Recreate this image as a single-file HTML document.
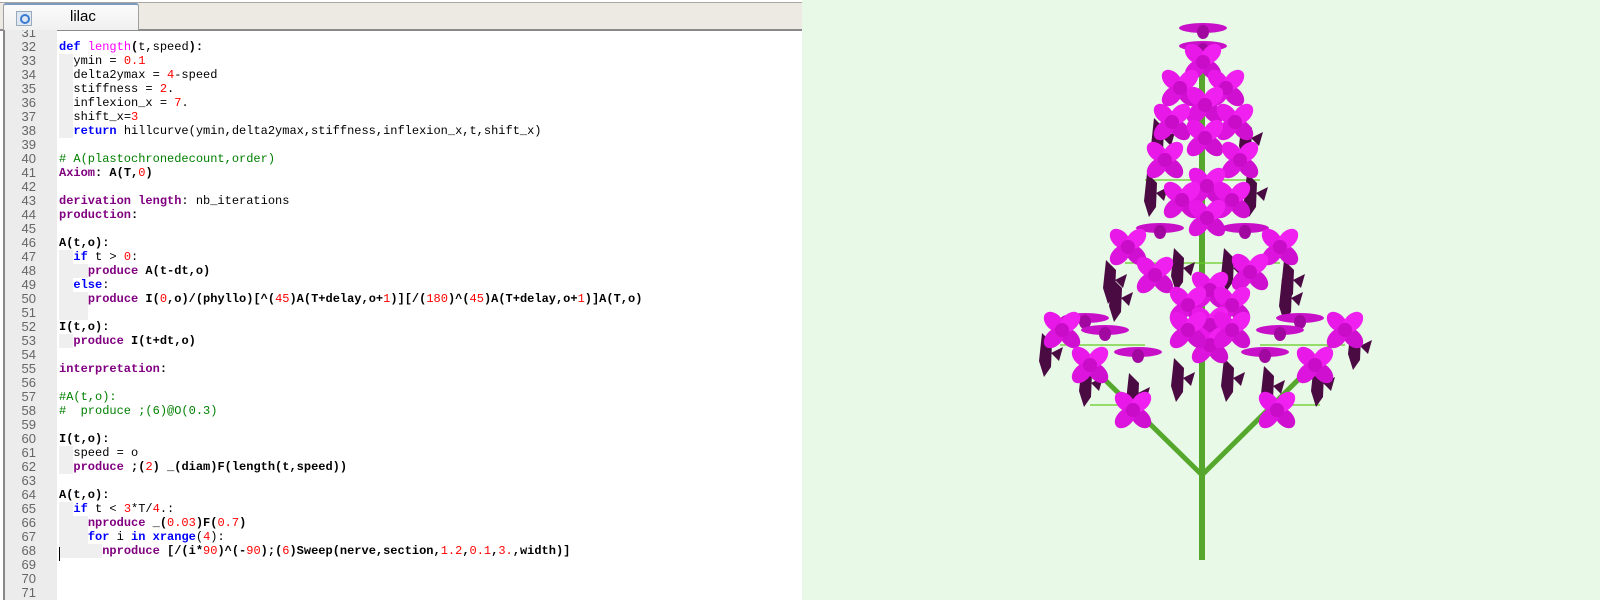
<!DOCTYPE html>
<html><head><meta charset="utf-8"><style>
body{margin:0;width:1600px;height:600px;overflow:hidden;background:#fff;position:relative;font-family:"Liberation Sans",sans-serif}
#ed{position:absolute;left:0;top:0;width:802px;height:600px;background:#fff;overflow:hidden}
#tb{position:absolute;left:0;top:2px;width:802px;height:26px;background:#ede9e3;border-top:1px solid #a8a8a0;border-bottom:2px solid #8a8a8a}
#tab{position:absolute;left:3px;top:3px;width:134px;height:25px;background:linear-gradient(#fbfbfb,#f0f0f0);border:1px solid #a0a0a0;border-top:2px solid #7a9ac0;border-bottom:none;border-radius:3px 3px 0 0}
#tab span{position:absolute;left:66px;top:3px;font-size:15px;color:#000}
#ico{position:absolute;left:12px;top:6px;width:14px;height:13px;background:#dde8f4;border:1px solid #9ab}
#ico:after{content:"";position:absolute;left:3px;top:2px;width:6px;height:6px;border:2px solid #3a7ad0;border-radius:50%}
#gut{position:absolute;left:3px;top:30px;width:52px;height:570px;background:#ececec;border-left:2px solid #888}
#code{position:absolute;left:0;top:30px;width:802px;height:570px;overflow:hidden}
.l{position:absolute;left:0;height:14px;line-height:14px;font-family:"Liberation Mono",monospace;font-size:12px;white-space:pre;color:#000}
.l .no{position:absolute;left:14px;width:22px;text-align:right;color:#666;font-family:"Liberation Sans",sans-serif;font-size:13px}
.l .t{position:absolute;left:59px}
.ind{background:#efefef}
.k{color:#0000ff;font-weight:bold}.f{color:#ff00ff}.n{color:#ff0000;font-weight:normal}.b{font-weight:bold}.p{color:#800080;font-weight:bold}.c{color:#008000}
#cur{position:absolute;left:59px;top:547px;width:1px;height:14px;background:#000}
#view{position:absolute;left:802px;top:0;width:798px;height:600px;background:#e8f9e8}
</style></head><body>
<div id="ed">
<div id="tb"></div>
<div id="tab"><div id="ico"></div><span>lilac</span></div>
<div id="gut"></div>
<div id="code">
<div class="l" style="top:-4px"><span class="no">31</span></div>
<div class="l" style="top:10px"><span class="no">32</span><span class="t"><span class="k">def</span> <span class="f">length</span><span class="b">(</span>t,speed<span class="b">):</span></span></div>
<div class="l" style="top:24px"><span class="no">33</span><span class="t"><span class="ind">  </span>ymin = <span class="n">0.1</span></span></div>
<div class="l" style="top:38px"><span class="no">34</span><span class="t"><span class="ind">  </span>delta2ymax = <span class="n">4</span>-speed</span></div>
<div class="l" style="top:52px"><span class="no">35</span><span class="t"><span class="ind">  </span>stiffness = <span class="n">2</span>.</span></div>
<div class="l" style="top:66px"><span class="no">36</span><span class="t"><span class="ind">  </span>inflexion_x = <span class="n">7</span>.</span></div>
<div class="l" style="top:80px"><span class="no">37</span><span class="t"><span class="ind">  </span>shift_x=<span class="n">3</span></span></div>
<div class="l" style="top:94px"><span class="no">38</span><span class="t"><span class="ind">  </span><span class="k">return</span> hillcurve(ymin,delta2ymax,stiffness,inflexion_x,t,shift_x)</span></div>
<div class="l" style="top:108px"><span class="no">39</span></div>
<div class="l" style="top:122px"><span class="no">40</span><span class="t c"># A(plastochronedecount,order)</span></div>
<div class="l" style="top:136px"><span class="no">41</span><span class="t b"><span class="p">Axiom</span>: A(T,<span class="n">0</span>)</span></div>
<div class="l" style="top:150px"><span class="no">42</span></div>
<div class="l" style="top:164px"><span class="no">43</span><span class="t"><span class="p">derivation length</span>: nb_iterations</span></div>
<div class="l" style="top:178px"><span class="no">44</span><span class="t"><span class="p">production</span><span class="b">:</span></span></div>
<div class="l" style="top:192px"><span class="no">45</span></div>
<div class="l" style="top:206px"><span class="no">46</span><span class="t b">A(t,o):</span></div>
<div class="l" style="top:220px"><span class="no">47</span><span class="t"><span class="ind">  </span><span class="k">if</span> t &gt; <span class="n">0</span>:</span></div>
<div class="l" style="top:234px"><span class="no">48</span><span class="t b"><span class="ind">    </span><span class="p">produce</span> A(t-dt,o)</span></div>
<div class="l" style="top:248px"><span class="no">49</span><span class="t"><span class="ind">  </span><span class="k">else</span>:</span></div>
<div class="l" style="top:262px"><span class="no">50</span><span class="t b"><span class="ind">    </span><span class="p">produce</span> I(<span class="n">0</span>,o)/(phyllo)[^(<span class="n">45</span>)A(T+delay,o+<span class="n">1</span>)][/(<span class="n">180</span>)^(<span class="n">45</span>)A(T+delay,o+<span class="n">1</span>)]A(T,o)</span></div>
<div class="l" style="top:276px"><span class="no">51</span><span class="t"><span class="ind">    </span></span></div>
<div class="l" style="top:290px"><span class="no">52</span><span class="t b">I(t,o):</span></div>
<div class="l" style="top:304px"><span class="no">53</span><span class="t b"><span class="ind">  </span><span class="p">produce</span> I(t+dt,o)</span></div>
<div class="l" style="top:318px"><span class="no">54</span></div>
<div class="l" style="top:332px"><span class="no">55</span><span class="t"><span class="p">interpretation</span><span class="b">:</span></span></div>
<div class="l" style="top:346px"><span class="no">56</span></div>
<div class="l" style="top:360px"><span class="no">57</span><span class="t c">#A(t,o):</span></div>
<div class="l" style="top:374px"><span class="no">58</span><span class="t c">#  produce ;(6)@O(0.3)</span></div>
<div class="l" style="top:388px"><span class="no">59</span></div>
<div class="l" style="top:402px"><span class="no">60</span><span class="t b">I(t,o):</span></div>
<div class="l" style="top:416px"><span class="no">61</span><span class="t"><span class="ind">  </span>speed = o</span></div>
<div class="l" style="top:430px"><span class="no">62</span><span class="t b"><span class="ind">  </span><span class="p">produce</span> ;(<span class="n">2</span>) _(diam)F(length(t,speed))</span></div>
<div class="l" style="top:444px"><span class="no">63</span></div>
<div class="l" style="top:458px"><span class="no">64</span><span class="t b">A(t,o):</span></div>
<div class="l" style="top:472px"><span class="no">65</span><span class="t"><span class="ind">  </span><span class="k">if</span> t &lt; <span class="n">3</span>*T/<span class="n">4</span>.:</span></div>
<div class="l" style="top:486px"><span class="no">66</span><span class="t b"><span class="ind">    </span><span class="p">nproduce</span> _(<span class="n">0.03</span>)F(<span class="n">0.7</span>)</span></div>
<div class="l" style="top:500px"><span class="no">67</span><span class="t"><span class="ind">    </span><span class="k">for</span> i <span class="k">in</span> <span class="k">xrange</span>(<span class="n">4</span>):</span></div>
<div class="l" style="top:514px"><span class="no">68</span><span class="t b"><span class="ind">      </span><span class="p">nproduce</span> [/(i*<span class="n">90</span>)^(-<span class="n">90</span>);(<span class="n">6</span>)Sweep(nerve,section,<span class="n">1.2</span>,<span class="n">0.1</span>,<span class="n">3.</span>,width)]</span></div>
<div class="l" style="top:528px"><span class="no">69</span></div>
<div class="l" style="top:542px"><span class="no">70</span></div>
<div class="l" style="top:556px"><span class="no">71</span></div>
</div>
<div id="cur"></div>
</div>
<div id="view">
<svg width="798" height="600" viewBox="802 0 798 600" xmlns="http://www.w3.org/2000/svg">
<defs>
<g id="x"><ellipse cx="-8" cy="-8" rx="12" ry="8" transform="rotate(45 -8 -8)" fill="#e818e8"/><ellipse cx="8" cy="8" rx="12" ry="8" transform="rotate(45 8 8)" fill="#d010d0"/><ellipse cx="8" cy="-8" rx="12" ry="8" transform="rotate(-45 8 -8)" fill="#f020f0"/><ellipse cx="-8" cy="8" rx="12" ry="8" transform="rotate(-45 -8 8)" fill="#dd14dd"/><circle r="7" fill="#c80cc8"/></g>
<g id="h"><ellipse cx="0" cy="0" rx="24" ry="5" fill="#c810c8"/><ellipse cx="0" cy="4" rx="6" ry="7" fill="#a008a0"/></g>
<g id="d"><path d="M-6 -22 L4 -12 L3 12 L-4 22 L-9 6 Z M3 -2 L15 -8 L11 6 Z" fill="#4a0a42"/></g>
</defs>
<g stroke="#56a82c" fill="none">
<line x1="1202" y1="70" x2="1202" y2="560" stroke-width="6"/>
<line x1="1202" y1="475" x2="1100" y2="375" stroke-width="5"/>
<line x1="1202" y1="475" x2="1305" y2="373" stroke-width="5"/>
<line x1="1100" y1="375" x2="1065" y2="335" stroke-width="4"/>
<line x1="1305" y1="373" x2="1345" y2="330" stroke-width="4"/>
<g stroke-width="1.2" stroke="#6c2"><line x1="1145" y1="180" x2="1260" y2="180"/><line x1="1125" y1="263" x2="1280" y2="263"/><line x1="1060" y1="345" x2="1145" y2="345"/><line x1="1260" y1="345" x2="1345" y2="345"/><line x1="1090" y1="405" x2="1130" y2="405"/><line x1="1280" y1="405" x2="1320" y2="405"/></g>
</g>
<g>
<use href="#d" x="1135" y="395"/><use href="#d" x="1270" y="388"/><use href="#d" x="1088" y="385"/><use href="#d" x="1320" y="385"/>
<use href="#d" x="1048" y="355"/><use href="#d" x="1357" y="348"/><use href="#d" x="1112" y="282"/><use href="#d" x="1290" y="282"/>
<use href="#d" x="1153" y="195"/><use href="#d" x="1253" y="195"/><use href="#d" x="1118" y="300"/><use href="#d" x="1288" y="300"/>
<use href="#d" x="1160" y="140"/><use href="#d" x="1248" y="140"/><use href="#d" x="1180" y="270"/><use href="#d" x="1230" y="270"/>
<use href="#d" x="1180" y="380"/><use href="#d" x="1230" y="380"/>
<use href="#h" x="1203" y="28"/><use href="#h" x="1203" y="46"/><use href="#h" x="1085" y="318"/><use href="#h" x="1105" y="330"/>
<use href="#h" x="1300" y="318"/><use href="#h" x="1280" y="330"/><use href="#h" x="1138" y="352"/><use href="#h" x="1265" y="352"/>
<use href="#h" x="1160" y="228"/><use href="#h" x="1245" y="228"/>
<use href="#x" x="1203" y="62"/><use href="#x" x="1180" y="88"/><use href="#x" x="1226" y="88"/><use href="#x" x="1205" y="105"/>
<use href="#x" x="1172" y="122"/><use href="#x" x="1235" y="122"/><use href="#x" x="1205" y="138"/>
<use href="#x" x="1165" y="160"/><use href="#x" x="1240" y="160"/>
<use href="#x" x="1207" y="186"/><use href="#x" x="1182" y="200"/><use href="#x" x="1232" y="200"/><use href="#x" x="1207" y="218"/>
<use href="#x" x="1128" y="247"/><use href="#x" x="1280" y="247"/><use href="#x" x="1155" y="275"/><use href="#x" x="1250" y="272"/>
<use href="#x" x="1210" y="290"/><use href="#x" x="1188" y="305"/><use href="#x" x="1232" y="305"/><use href="#x" x="1210" y="325"/><use href="#x" x="1210" y="345"/><use href="#x" x="1188" y="330"/><use href="#x" x="1232" y="330"/>
<use href="#x" x="1062" y="330"/><use href="#x" x="1345" y="330"/><use href="#x" x="1090" y="365"/><use href="#x" x="1315" y="365"/>
<use href="#x" x="1133" y="410"/><use href="#x" x="1277" y="410"/>
</g>
</svg>
</div>
</body></html>
